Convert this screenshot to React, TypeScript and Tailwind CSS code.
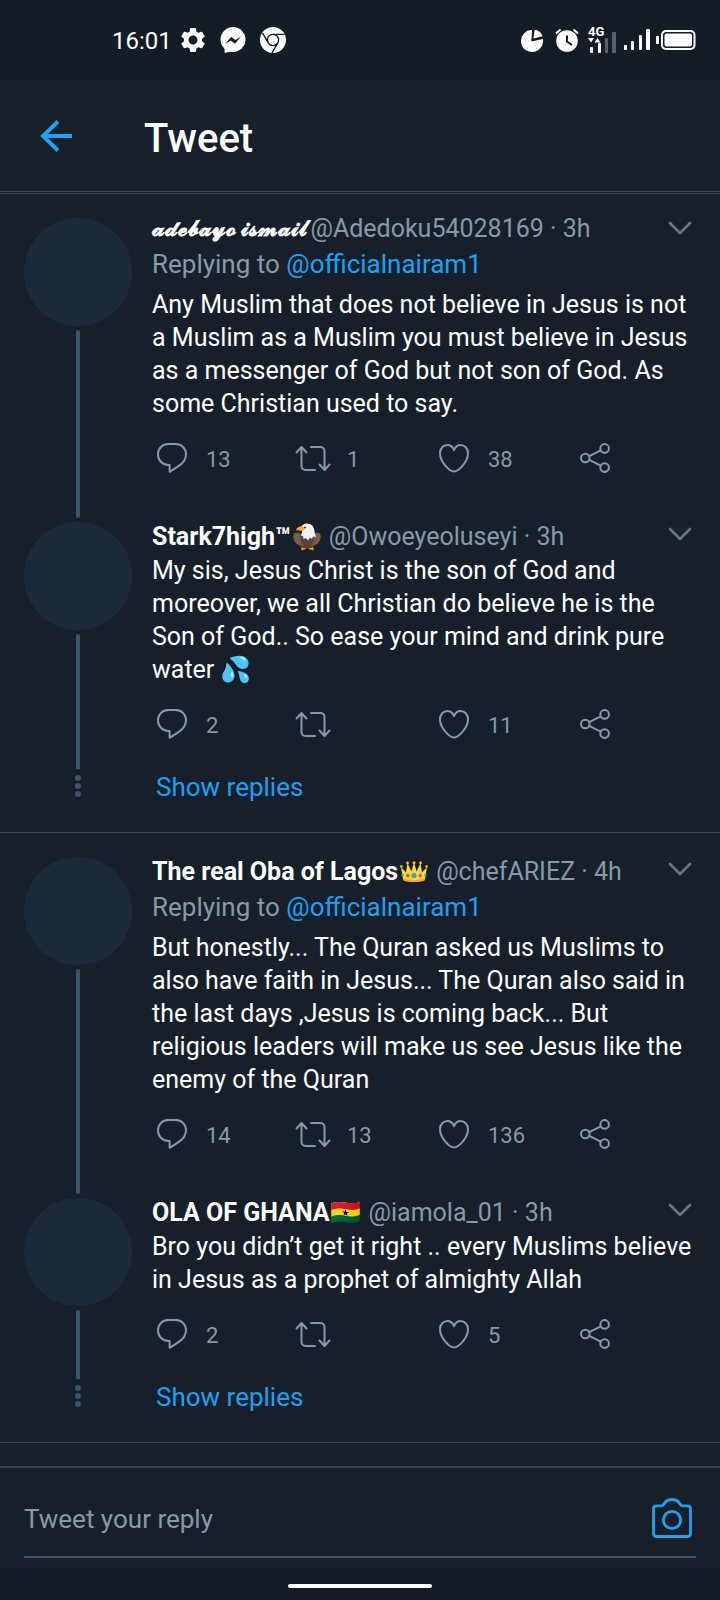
import type { ReactNode } from 'react'
import { clsx } from 'clsx'
import { MdSettings } from 'react-icons/md'

interface TweetData {
  id: number
  name: string
  badge?: ReactNode
  script?: boolean
  handle: string
  time: string
  replyingTo?: string
  text: string
  replies: number
  retweets?: number
  likes: number
}

const EagleEmoji = () => (
  <svg width="28" height="28" viewBox="0 0 28 28" role="img" aria-label="eagle">
    <path d="M9 22.500h4v3.500h-1.300l-.7 1.500-.7-1.500-.8 1.500-1.300-1zM15.500 22.500h4l1.300 4-1.500 1-.6-1.500-.7 1.500-.8-1.500h-1.500z" fill="#f5a623" />
    <path d="M1 10.500c2.500-1 5-.8 7.500.5h11c2.500-1.300 5-1.500 7.500-.5 1.500 5-.5 10-5.500 12-1 2-3.500 3-7.500 3s-6.500-1-7.500-3c-5-2-7-7-5.500-12z" fill="#5d4037" />
    <path d="M1 10.500c2.500-1 4.500-.8 6 .5 0 4 .5 8 3 11.500-6.500.5-11-5-9-12zM27 10.500c-2.500-1-4.500-.8-6 .5 0 4-.5 8-3 11.500 6.500.5 11-5 9-12z" fill="#7b5a4f" />
    <path d="M7.500 5C8.500 2 11 .5 14 .5c4.500 0 7 3 7.500 7.500.3 3 1 4.500 1.500 6l-3-.6-1 2.600-2-1.500-2 3-2-2.500-2.500 1-.5-3-2.500-.5C9 10 9.500 8.500 9 7z" fill="#f1f3f4" />
    <path d="M10.500 3.500C7.500 2.800 4 3.800 3 7.500c2-.6 3.300-.3 5 .3 2 .7 3.500-.6 3.500-2.300z" fill="#fbb01b" />
    <circle cx="12" cy="4.600" r="1" fill="#4e342e" />
  </svg>
)

const CrownEmoji = () => (
  <svg width="28" height="22" viewBox="0 0 28 22" role="img" aria-label="crown">
    <path
      d="M3 18.500L1 6l5 5.500L7.500 2l3.800 8.500L14 1.500l2.700 9L20.500 2 22 11.500 27 6l-2 12.500c-3 2-19 2-22 0z"
      fill="#fdd835"
    />
    <path d="M3 17.500c4 1.800 18 1.800 22 0l-.3 2c-4 2-17.400 2-21.400 0z" fill="#f9a825" />
    <g fill="#fbc02d">
      <circle cx="1.400" cy="5.500" r="1.300" />
      <circle cx="7.500" cy="2" r="1.400" />
      <circle cx="14" cy="1.700" r="1.500" />
      <circle cx="20.500" cy="2" r="1.400" />
      <circle cx="26.600" cy="5.500" r="1.300" />
    </g>
    <circle cx="14" cy="14.500" r="2.600" fill="#29a8e0" />
    <circle cx="7.800" cy="14.500" r="1.700" fill="#f0475f" />
    <circle cx="20.200" cy="14.500" r="1.700" fill="#f0475f" />
    <circle cx="2.600" cy="14" r="1.300" fill="#29a8e0" />
    <circle cx="25.400" cy="14" r="1.300" fill="#29a8e0" />
  </svg>
)

const threads: TweetData[][] = [
  [
    {
      id: 1,
      name: '𝓪𝓭𝓮𝓫𝓪𝔂𝓸 𝓲𝓼𝓶𝓪𝓲𝓵',
      script: true,
      handle: '@Adedoku54028169',
      time: '3h',
      replyingTo: '@officialnairam1',
      text: 'Any Muslim that does not believe in Jesus is not a Muslim as a Muslim you must believe in Jesus as a messenger of God but not son of God. As some Christian used to say.',
      replies: 13,
      retweets: 1,
      likes: 38,
    },
    {
      id: 2,
      name: 'Stark7high™',
      badge: <EagleEmoji />,
      handle: '@Owoeyeoluseyi',
      time: '3h',
      text: 'My sis, Jesus Christ is the son of God and moreover, we all Christian do believe he is the Son of God.. So ease your mind and drink pure water 💦',
      replies: 2,
      likes: 11,
    },
  ],
  [
    {
      id: 3,
      name: 'The real Oba of Lagos',
      badge: <CrownEmoji />,
      handle: '@chefARIEZ',
      time: '4h',
      replyingTo: '@officialnairam1',
      text: 'But honestly... The Quran asked us Muslims to also have faith in Jesus... The Quran also said in the last days ,Jesus is coming back... But religious leaders will make us see Jesus like the enemy of the Quran',
      replies: 14,
      retweets: 13,
      likes: 136,
    },
    {
      id: 4,
      name: 'OLA OF GHANA🇬🇭',
      handle: '@iamola_01',
      time: '3h',
      text: 'Bro you didn’t get it right .. every Muslims believe in Jesus as a prophet of almighty Allah',
      replies: 2,
      likes: 5,
    },
  ],
]

const stroke = {
  fill: 'none',
  stroke: 'currentColor',
  strokeWidth: 2,
  strokeLinecap: 'round',
  strokeLinejoin: 'round',
} as const

const CommentIcon = () => (
  <svg width="30" height="30" viewBox="0 0 30 30" {...stroke}>
    <path d="M11.200 1h7.600C24.600 1 29 5.600 29 11.200c0 6.200-3.600 9.600-8.600 12.600l-7.800 5V22h-1.400C5.400 21.800 1 17.200 1 11.400 1 5.600 5.400 1 11.200 1z" />
  </svg>
)

const RetweetIcon = () => (
  <svg width="36" height="30" viewBox="0 0 36 30" {...stroke}>
    <path d="M1.500 9.500l5-5.500 5 5.500M6.500 4.500V23a4 4 0 0 0 4 4H20" />
    <path d="M16 4h9.500a4 4 0 0 1 4 4v18.500M24.500 21.500l5 5.500 5-5.500" />
  </svg>
)

const HeartIcon = () => (
  <svg width="30" height="30" viewBox="0 0 30 30" {...stroke}>
    <path d="M15 28.400C11 28.400 1 19.500 1 10.300 1 5.300 4.400 2 8.400 2c3.400 0 5.600 2.400 6.600 5.200C16 4.400 18.200 2 21.600 2c4 0 7.400 3.300 7.400 8.300 0 9.200-10 18.100-14 18.100z" />
  </svg>
)

const ShareIcon = () => (
  <svg width="30" height="30" viewBox="0 0 30 30" {...stroke}>
    <circle cx="5.300" cy="15" r="4.300" />
    <circle cx="24.600" cy="5.400" r="4.300" />
    <circle cx="24.600" cy="24.600" r="4.300" />
    <path d="M9.200 13.100l11.500-5.800M9.200 16.900l11.500 5.800" />
  </svg>
)

const ChevronIcon = () => (
  <svg width="24" height="14" viewBox="0 0 24 14" {...stroke} strokeWidth={2.6}>
    <path d="M2 2l10 10L22 2" />
  </svg>
)

const BackIcon = () => (
  <svg width="32" height="32" viewBox="0 0 32 32" fill="none" stroke="currentColor" strokeWidth="4">
    <path d="M18 1.500L3 16l15 14.500M3 16h29" />
  </svg>
)

const CameraIcon = () => (
  <svg width="40" height="40" viewBox="0 0 40 40" {...stroke} strokeWidth={2.8}>
    <path d="M4.500 7.800h5.200c1.600 0 1.800-1 2.800-2.600C14 2.800 16.500 1.500 20 1.500s6 1.300 7.500 3.700c1 1.600 1.200 2.600 2.800 2.600h5.200c1.800 0 3 1.200 3 3v24.700c0 1.800-1.200 3-3 3h-31c-1.800 0-3-1.200-3-3V10.800c0-1.800 1.200-3 3-3z" />
    <circle cx="20" cy="22" r="8.600" />
  </svg>
)

const MessengerIcon = () => (
  <svg width="26" height="26" viewBox="0 0 26 26">
    <circle cx="13" cy="12.500" r="12.500" fill="currentColor" />
    <path fill="currentColor" d="M4.600 18h6v6.500l-6 1.500z" />
    <path fill="#141d26" d="M5 17l6.300-7.200 4 3.300L21 9.500l-6 7.300-4.200-3.300z" />
  </svg>
)

const ChromeIcon = () => (
  <svg width="26" height="26" viewBox="0 0 26 26">
    <circle cx="13" cy="13" r="13" fill="currentColor" />
    <g fill="none" stroke="#141d26" strokeWidth="1.400">
      <circle cx="13" cy="13" r="5.600" />
      <path d="M13 7.400h11.800M8.200 15.800L2.500 5.800M17.800 15.800L12 26" />
    </g>
  </svg>
)

const DataUsageIcon = () => (
  <svg width="24" height="24" viewBox="0 0 24 24" fill="currentColor">
    <path d="M12 2a11 11 0 1 0 10.800 9L11.500 13.500z" />
    <path d="M14 .8l-1.600 10.700 11.200-2.800A11.500 11.500 0 0 0 14 .8z" stroke="#141d26" strokeWidth="1.600" />
  </svg>
)

const AlarmIcon = () => (
  <svg width="24" height="24" viewBox="0 0 24 24">
    <circle cx="12" cy="13" r="10.800" fill="currentColor" />
    <path d="M1 5.500L5.500 1.500M23 5.500l-4.500-4" stroke="currentColor" strokeWidth="2" />
    <path d="M12 7.500V13.500l5 3.500" fill="none" stroke="#141d26" strokeWidth="2" />
  </svg>
)

const NetworkIcon = () => (
  <div className="flex w-[30px] flex-col">
    <span className="text-[13px] leading-[11px] font-bold">4G</span>
    <svg width="30" height="18" viewBox="0 0 30 18" fill="currentColor" overflow="visible">
      <path d="M0 1h6l-3 4.500zM6.500 5.500h6l-3-4.500z" />
      <rect x="2" y="10" width="3" height="6" rx="1" />
      <rect x="10" y="6" width="3" height="10" rx="1" />
      <rect x="17" y="1" width="3" height="15" rx="1" opacity=".3" />
      <rect x="24" y="-5" width="4" height="21" rx="1" opacity=".3" />
    </svg>
  </div>
)

const SignalIcon = () => (
  <svg width="26" height="22" viewBox="0 0 26 22" fill="currentColor">
    <rect x="0" y="16" width="3" height="5" rx="1" />
    <rect x="7" y="12" width="3" height="9" rx="1" />
    <rect x="15" y="6" width="3" height="15" rx="1" />
    <rect x="22" y="0" width="4" height="21" rx="1" />
  </svg>
)

const BatteryIcon = () => (
  <svg width="40" height="20" viewBox="0 0 40 20">
    <rect x="0" y="6" width="3" height="8" rx="1" fill="currentColor" />
    <rect x="6" y="1" width="32.500" height="18" rx="4" fill="none" stroke="currentColor" strokeWidth="2" />
    <rect x="8.500" y="3.500" width="27.500" height="13" rx="2" fill="currentColor" />
  </svg>
)

function StatusBar() {
  return (
    <div className="flex h-20 items-center justify-between bg-[#141d26] pr-6 pl-28 text-white">
      <div className="flex items-center">
        <span className="mr-1.5 pt-0.5 text-2xl">16:01</span>
        <MdSettings className="mr-3 size-[30px]" />
        <div className="flex gap-[14px]">
          <MessengerIcon />
          <ChromeIcon />
        </div>
      </div>
      <div className="flex items-center">
        <DataUsageIcon />
        <div className="mr-[9px] ml-[11px]">
          <AlarmIcon />
        </div>
        <NetworkIcon />
        <div className="mr-1.5 ml-1.5">
          <SignalIcon />
        </div>
        <BatteryIcon />
      </div>
    </div>
  )
}

interface ActionProps {
  label: string
  icon: ReactNode
  count?: number
  last?: boolean
}

function Action({ label, icon, count, last }: ActionProps) {
  return (
    <button
      type="button"
      aria-label={label}
      className={clsx('flex h-[30px] items-center gap-4', last ? 'shrink-0' : 'flex-1')}
    >
      <span className="flex w-9 shrink-0 justify-center">{icon}</span>
      {count !== undefined && <span className="pt-0.5 text-[22px]">{count}</span>}
    </button>
  )
}

function Tweet({ tweet, last }: { tweet: TweetData; last: boolean }) {
  return (
    <article className="flex gap-5 px-6">
      <div className="flex w-[108px] shrink-0 flex-col items-center">
        <div className="size-[108px] rounded-full bg-[#1c2938]" />
        <div className={clsx('mt-1 w-1 flex-1 bg-[#3d5466]', last ? 'rounded-t-sm' : 'mb-1 rounded-sm')} />
      </div>
      <div className={clsx('min-w-0 flex-1', last ? 'pb-[30px]' : 'pb-[49px]')}>
        <div className={clsx('flex items-start justify-between', tweet.script ? 'h-6 leading-[22px]' : 'h-7 leading-[30px]')}>
          <div className={clsx('flex text-[25px] whitespace-nowrap text-[#8899a6]', tweet.script ? 'gap-[3px]' : 'gap-2')}>
            <span className={clsx('flex items-center gap-0.5 font-bold text-white', tweet.script && 'text-[22px]')}>
              {tweet.name}
              {tweet.badge}
            </span>
            <span>
              {tweet.handle} · {tweet.time}
            </span>
          </div>
          <button
            type="button"
            aria-label="More options"
            className={clsx('mr-1 text-[#657786]', tweet.script ? 'mt-[3px]' : 'mt-[5px]')}
          >
            <ChevronIcon />
          </button>
        </div>
        {tweet.replyingTo && (
          <p className="mt-1.5 text-[26px] leading-[33px] text-[#8899a6]">
            Replying to{' '}
            <a href="#" className="text-[#1da1f2]">
              {tweet.replyingTo}
            </a>
          </p>
        )}
        <p className={clsx('text-[25px] leading-[33px] text-white', tweet.replyingTo ? 'mt-[7px]' : 'mt-1')}>
          {tweet.text}
        </p>
        <div className="mt-[23px] flex pr-[83px] pl-0.5 text-[#8899a6]">
          <Action label="Reply" icon={<CommentIcon />} count={tweet.replies} />
          <Action label="Retweet" icon={<RetweetIcon />} count={tweet.retweets} />
          <Action label="Like" icon={<HeartIcon />} count={tweet.likes} />
          <Action label="Share" icon={<ShareIcon />} last />
        </div>
      </div>
    </article>
  )
}

function Thread({ tweets }: { tweets: TweetData[] }) {
  return (
    <section className="border-b border-[#38444d] pt-6">
      {tweets.map((tweet, i) => (
        <Tweet key={tweet.id} tweet={tweet} last={i === tweets.length - 1} />
      ))}
      <div className="flex gap-6 px-6 pb-7">
        <div className="flex w-[108px] shrink-0 flex-col items-center gap-0.5 pt-1.5">
          <span className="size-1.5 rounded-full bg-[#3d5466]" />
          <span className="size-1.5 rounded-full bg-[#3d5466]" />
          <span className="size-1.5 rounded-full bg-[#3d5466]" />
        </div>
        <button type="button" className="pt-0.5 text-[26px] leading-[33px] text-[#1da1f2]">
          Show replies
        </button>
      </div>
    </section>
  )
}

export default function App() {
  return (
    <div className="flex min-h-screen flex-col bg-[#17202a] font-['Roboto',sans-serif]">
      <StatusBar />
      <header className="border-b border-[#38444d] pb-px">
        <div className="flex h-28 items-center border-b border-[#38444d] pl-10">
          <button type="button" aria-label="Back" className="text-[#1da1f2]">
            <BackIcon />
          </button>
          <h1 className="ml-[72px] pt-1.5 text-[40px] font-medium text-white">Tweet</h1>
        </div>
      </header>
      <main className="flex-1">
        {threads.map((tweets) => (
          <Thread key={tweets[0].id} tweets={tweets} />
        ))}
      </main>
      <footer>
        <form className="border-t-2 border-[#38444d] px-6 pb-[10px]">
          <div className="flex h-[90px] items-center border-b-2 border-[#3d5466] pt-3 pr-1">
            <input
              type="text"
              aria-label="Tweet your reply"
              placeholder="Tweet your reply"
              className="min-w-0 flex-1 bg-transparent pt-0.5 text-[26px] text-white outline-none placeholder:text-[#8899a6]"
            />
            <button type="button" aria-label="Add photo" className="text-[#1da1f2]">
              <CameraIcon />
            </button>
          </div>
        </form>
        <div className="flex h-8 items-center justify-center bg-[#141d26] pt-1">
          <div className="h-1 w-1/5 rounded-full bg-white" />
        </div>
      </footer>
    </div>
  )
}
